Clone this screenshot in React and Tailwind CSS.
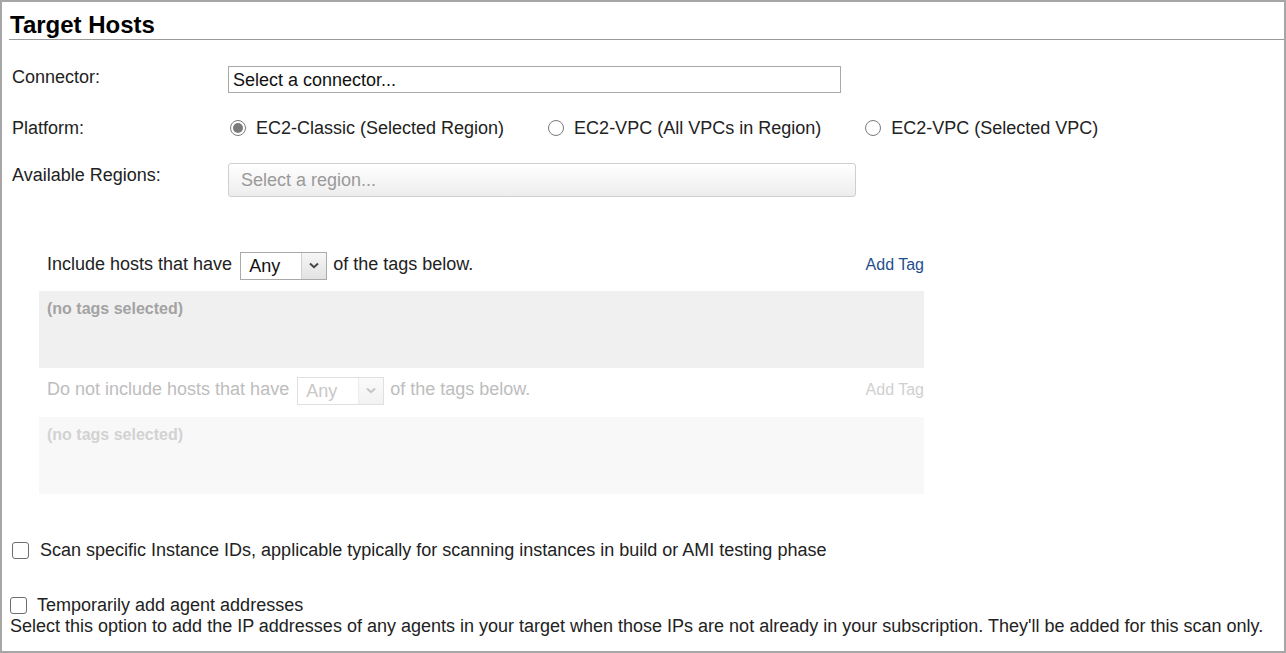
import React from "react";

function Radio({ checked, label }) {
  return (
    <label className="flex items-center">
      <span className="flex h-[16px] w-[16px] shrink-0 items-center justify-center rounded-full border border-[#7a7a7a] bg-white">
        {checked && <span className="h-[10px] w-[10px] rounded-full bg-[#7a7a7a]" />}
      </span>
      <span className="ml-[10px]">{label}</span>
    </label>
  );
}

function Checkbox() {
  return <span className="inline-block h-[17px] w-[17px] shrink-0 rounded-[3px] border border-[#6e6e6e] bg-white" />;
}

function AnySelect({ disabled }) {
  return (
    <div
      className={[
        "flex h-[28px] w-[87px] border",
        disabled ? "border-[#e0e0e0] text-[#c8c8c8]" : "border-[#aaaaaa] text-[#111]",
      ].join(" ")}
    >
      <div className="flex flex-1 items-center bg-white pl-[8px] pt-[2px]">Any</div>
      <div
        className={[
          "flex w-[25px] items-center justify-center border-l bg-gradient-to-b",
          disabled ? "border-[#ececec] from-[#fafafa] to-[#f2f2f2]" : "border-[#d0d0d0] from-[#f6f6f6] to-[#e2e2e2]",
        ].join(" ")}
      >
        <svg width="10" height="7" viewBox="0 0 10 7">
          <path
            d="M1 1.5 L5 5.2 L9 1.5"
            fill="none"
            stroke={disabled ? "#c4c4c4" : "#444"}
            strokeWidth="2"
          />
        </svg>
      </div>
    </div>
  );
}

function TagGroup({ prefix, disabled }) {
  return (
    <div className={["flex h-[29px] items-center pl-[8px]", disabled ? "text-[#bdbdbd]" : "text-[#222]"].join(" ")}>
      <span className="-mt-[2px] mr-[8px]">{prefix}</span>
      <AnySelect disabled={disabled} />
      <span className="-mt-[2px] ml-[6px]">of the tags below.</span>
      <span
        className={[
          "-mt-[2px] ml-auto text-[16px]",
          disabled ? "text-[#cfcfcf]" : "text-[#1f4e8f]",
        ].join(" ")}
      >
        Add Tag
      </span>
    </div>
  );
}

export default function App() {
  return (
    <div
      className="h-[653px] w-[1286px] border-2 border-[#a6a6a6] bg-white text-[18px] text-[#222]"
      style={{ fontFamily: '"Liberation Sans", Arial, sans-serif' }}
    >
      {/* Header */}
      <div className="ml-[7px] mt-[9px] border-b border-[#9a9a9a] pl-[1px] text-[24px] font-bold leading-[28px] text-black">
        Target Hosts
      </div>

      {/* Connector */}
      <div className="ml-[10px] mt-[26px] flex">
        <div className="w-[216px] leading-[22px]">Connector:</div>
        <div className="flex h-[27px] w-[613px] items-center border border-[#a9a9a9] pl-[4px] pt-[1px] text-[#111]">
          Select a connector...
        </div>
      </div>

      {/* Platform */}
      <div className="ml-[10px] mt-[24px] flex h-[22px] items-center">
        <div className="w-[218px]">Platform:</div>
        <div className="flex items-center gap-[44px]">
          <Radio checked label="EC2-Classic (Selected Region)" />
          <Radio label="EC2-VPC (All VPCs in Region)" />
          <Radio label="EC2-VPC (Selected VPC)" />
        </div>
      </div>

      {/* Regions */}
      <div className="ml-[10px] mt-[24px] flex">
        <div className="w-[216px] pt-[1px] leading-[22px]">Available Regions:</div>
        <div className="flex h-[34px] w-[628px] items-center rounded-[3px] border border-[#cfcfcf] bg-gradient-to-b from-white to-[#ededed] pl-[12px] text-[#9a9a9a]">
          Select a region...
        </div>
      </div>

      {/* Tag filters */}
      <div className="ml-[37px] mt-[54px] w-[885px]">
        <TagGroup prefix="Include hosts that have" />
        <div className="mt-[11px] h-[77px] bg-[#f0f0f0] pl-[8px] pt-[8px] text-[16px] font-bold leading-[20px] text-[#a3a3a3]">
          (no tags selected)
        </div>
        <div className="mt-[8px]">
          <TagGroup prefix="Do not include hosts that have" disabled />
        </div>
        <div className="mt-[12px] h-[77px] bg-[#f8f8f8] pl-[8px] pt-[8px] text-[16px] font-bold leading-[20px] text-[#d2d2d2]">
          (no tags selected)
        </div>
      </div>

      {/* Options */}
      <div className="ml-[10px] mt-[45px] flex h-[22px] items-center">
        <Checkbox />
        <span className="ml-[11px]">
          Scan specific Instance IDs, applicable typically for scanning instances in build or AMI testing phase
        </span>
      </div>

      <div className="ml-[8px] mt-[33px] flex h-[22px] items-center">
        <Checkbox />
        <span className="ml-[10px]">Temporarily add agent addresses</span>
      </div>
      <div className="ml-[8px] leading-[20px]">
        Select this option to add the IP addresses of any agents in your target when those IPs are not already in your
        subscription. They'll be added for this scan only.
      </div>
    </div>
  );
}
